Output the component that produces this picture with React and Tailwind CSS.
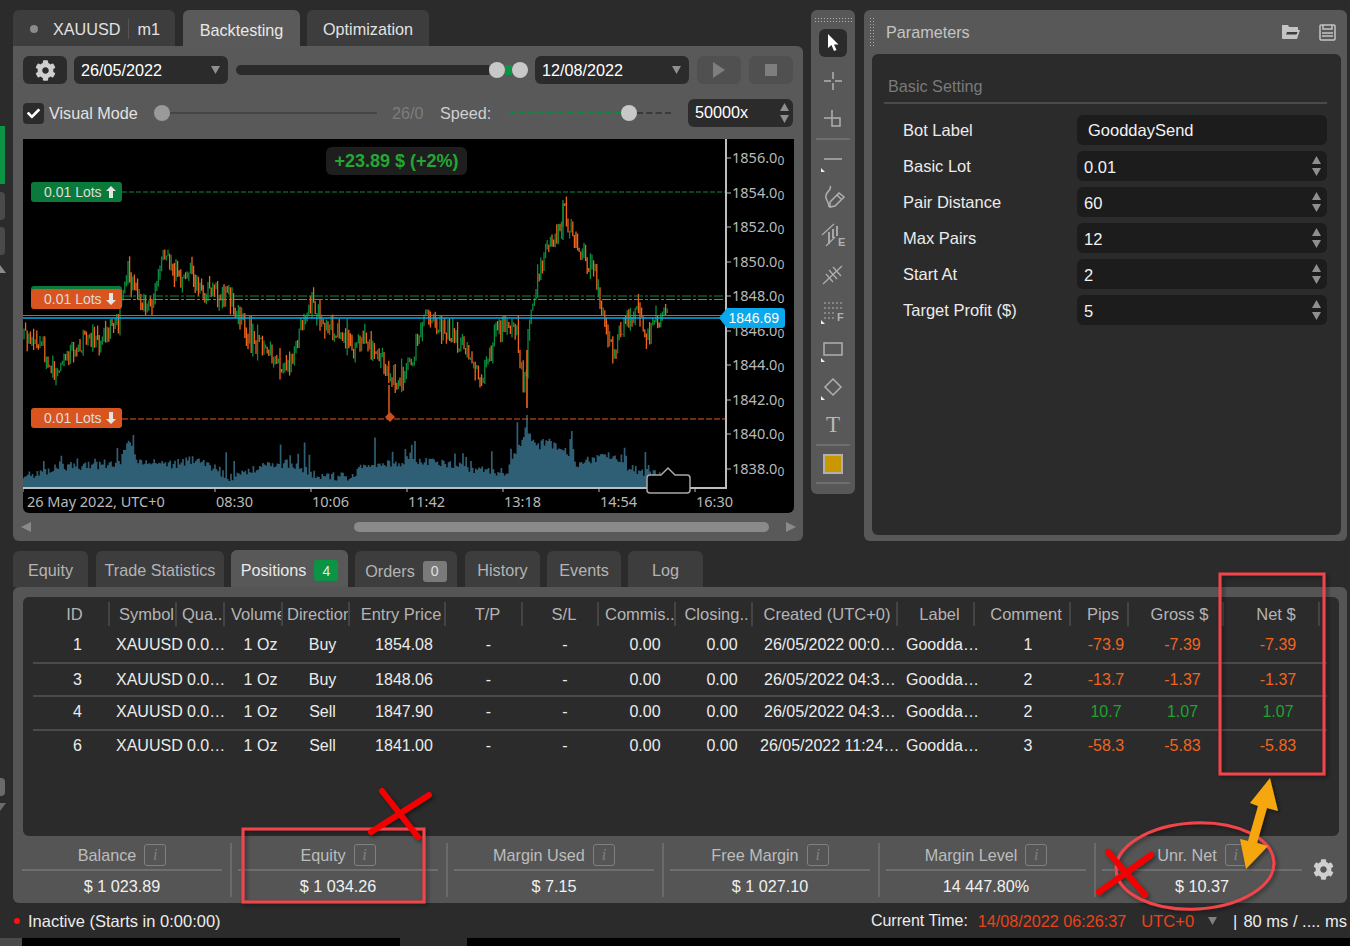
import React from 'react';
import { FaCog, FaCheck } from 'react-icons/fa';

/* chart data: rough outline of the price, the rest is seeded noise */
const PRICE = [[23,338],[33,332],[42,345],[54,374],[65,358],[78,345],[90,340],[105,335],[118,325],[128,272],[138,298],[150,308],[160,262],[170,260],[180,282],[190,272],[198,290],[212,296],[228,296],[240,315],[250,338],[265,350],[280,362],[288,370],[295,345],[305,318],[314,305],[322,322],[340,330],[352,345],[362,340],[375,350],[386,368],[395,382],[410,368],[420,330],[428,315],[445,330],[462,345],[475,368],[484,378],[495,330],[505,325],[516,330],[524,388],[530,325],[540,272],[550,248],[558,235],[563,210],[570,230],[580,252],[594,268],[604,318],[613,352],[622,325],[637,312],[648,335],[658,322],[668,316]];
const VOLUME = [[23,476],[35,474],[60,466],[120,465],[127,440],[140,462],[175,464],[197,458],[215,468],[230,478],[260,467],[287,464],[320,476],[347,477],[367,465],[433,462],[450,465],[480,470],[507,473],[517,450],[526,430],[537,447],[547,442],[567,450],[577,463],[610,456],[627,468],[660,475],[668,480]];

function rng(seed) {
  let s = seed;
  return () => {
    s = (s + 0x6d2b79f5) | 0;
    let t = Math.imul(s ^ (s >>> 15), 1 | s);
    t = (t + Math.imul(t ^ (t >>> 7), 61 | t)) ^ t;
    return ((t ^ (t >>> 14)) >>> 0) / 4294967296;
  };
}

function lerp(points, x) {
  for (let i = 1; i < points.length; i++) {
    if (x <= points[i][0]) {
      const [x0, y0] = points[i - 1];
      const [x1, y1] = points[i];
      return y0 + ((y1 - y0) * (x - x0)) / (x1 - x0);
    }
  }
  return points[points.length - 1][1];
}

function buildCandles() {
  const r = rng(23);
  let green = '';
  let orange = '';
  let prev = lerp(PRICE, 23);
  for (let x = 24; x < 668; x += 1.6) {
    const close = lerp(PRICE, x) + (r() - 0.5) * 20;
    const top = Math.min(prev, close) - r() * r() * 14;
    const bottom = Math.max(prev, close) + r() * r() * 14;
    const seg = `M${x.toFixed(1)} ${top.toFixed(1)}V${bottom.toFixed(1)}`;
    if (close < prev) green += seg;
    else orange += seg;
    prev = close;
  }
  return { green, orange };
}

function buildVolume() {
  const r = rng(5);
  let d = '';
  for (let x = 23; x < 668; x += 1.6) {
    const spike = r() > 0.88 ? r() * 26 : 0;
    const top = lerp(VOLUME, x) + (r() - 0.5) * 9 - spike;
    d += `M${x.toFixed(1)} 487V${Math.min(top, 485).toFixed(1)}`;
  }
  return d;
}

const candles = buildCandles();
const volumeBars = buildVolume();
const axisLabels = [['1856', 158], ['1854', 193], ['1852', 227], ['1850', 262], ['1848', 296], ['1846', 331], ['1844', 365], ['1842', 400], ['1840', 434], ['1838', 469]];
const timeLabels = [['08:30', 215], ['10:06', 311], ['11:42', 407], ['13:18', 503], ['14:54', 599], ['16:30', 695]];

function ChartDrawing() {
  return (
    <svg width="771" height="374" viewBox="23 139 771 374" className="block">
      <path d={volumeBars} stroke="#2f5f75" strokeWidth="1.7" fill="none" />
      <path d={candles.green} stroke="#0c8a3c" strokeWidth="1.3" fill="none" />
      <path d={candles.orange} stroke="#f0641e" strokeWidth="1.3" fill="none" />
      <path d="M389 385V417" stroke="#f0641e" strokeWidth="1.4" />
      <path d="M527 350V408" stroke="#f0641e" strokeWidth="1.6" />
      <path d="M563 200V240" stroke="#0c8a3c" strokeWidth="1.4" />
      <path d="M122 192H726" stroke="#0c8a3c" strokeDasharray="5 2" />
      <path d="M122 296H726" stroke="#0c8a3c" strokeDasharray="9 2 3 2" />
      <path d="M122 299.5H726" stroke="#e0581f" strokeDasharray="9 2 3 2" />
      <path d="M122 419H726" stroke="#e0581f" strokeDasharray="6 2" />
      <path d="M23 315.5H726" stroke="#777" />
      <path d="M23 318H726" stroke="#00aeef" strokeWidth="1.4" />
      <polygon points="390,412 395,417 390,422 385,417" fill="#c9501f" />
      <path d="M726 139V488H23" stroke="#bdbdbd" strokeWidth="2" fill="none" />
      {axisLabels.map(([price, y]) => (
        <g key={price}>
          <path d={`M727 ${y}H731`} stroke="#bdbdbd" />
          <text x="732" y={y + 5} fontSize="14.5" fill="#b9b9b9" fontFamily="'Noto Sans',sans-serif">
            {price}.0<tspan fontSize="12" dy="2">0</tspan>
          </text>
        </g>
      ))}
      <path d="M23 488V492" stroke="#bdbdbd" />
      <text x="27" y="507" fontSize="14.5" fill="#b9b9b9" fontFamily="'Noto Sans',sans-serif">26 May 2022, UTC+0</text>
      {timeLabels.map(([t, x]) => (
        <g key={t}>
          <path d={`M${x} 488V492`} stroke="#bdbdbd" />
          <text x={x + 1} y="507" fontSize="14.5" fill="#b9b9b9" fontFamily="'Noto Sans',sans-serif">{t}</text>
        </g>
      ))}
      <path d="M650 475H661L668 468L675 475H687Q690 475 690 478V490Q690 493 687 493H650Q647 493 647 490V478Q647 475 650 475Z" fill="#000" stroke="#a8a8a8" strokeWidth="1.5" />
    </svg>
  );
}

function LotsTag({ color, up, className }) {
  return (
    <div className={`absolute left-2 flex h-5 w-[91px] items-center rounded-[3px] pl-[13px] text-sm text-[#dddddd] ${color} ${className}`}>
      0.01 Lots
      <svg className="ml-1" width="10" height="12" viewBox="0 0 10 12" fill="#e4e4e4">
        {up ? <polygon points="5,0 10,5 7,5 7,12 3,12 3,5 0,5" /> : <polygon points="5,12 10,7 7,7 7,0 3,0 3,7 0,7" />}
      </svg>
    </div>
  );
}

function BacktestPanel() {
  return (
    <div className="flex w-[790px] flex-col">
      <div className="flex h-9 items-end">
        <div className="flex h-9 w-[162px] items-center rounded-t-md bg-[#3d3d3d] pt-0.5 text-[#e2e2e2]">
          <span className="ml-[17px] h-2 w-2 rounded-full bg-[#8a8a8a]" />
          <span className="ml-[15px]">XAUUSD</span>
          <span className="ml-2 h-5 w-px bg-[#555555]" />
          <span className="ml-2">m1</span>
        </div>
        <div className="ml-2 flex h-9 w-[117px] items-center justify-center rounded-t-md bg-[#5a5a5a] pt-1 text-[#e8e8e8]">Backtesting</div>
        <div className="ml-[7px] flex h-9 w-[122px] items-center justify-center rounded-t-md bg-[#3d3d3d] pt-0.5 text-[#e2e2e2]">Optimization</div>
      </div>
      <div className="flex h-[495px] flex-col rounded-b-md rounded-tr-md bg-[#595959] pl-2.5 pt-2.5">
        <div className="flex h-7 items-center">
          <div className="flex h-7 w-11 items-center justify-center rounded-md bg-[#2b2b2b] text-[#cfcfcf]"><FaCog className="text-[21px]" /></div>
          <DateBox className="ml-[7px]" value="26/05/2022" />
          <div className="ml-2 h-2.5 w-[253px] rounded-l-full bg-[#2b2b2b]" />
          <span className="h-4 w-4 rounded-full bg-[#c8c8c8]" />
          <span className="h-2.5 w-[7px] bg-[#0b9444]" />
          <span className="h-4 w-4 rounded-full bg-[#c8c8c8]" />
          <DateBox className="ml-[7px]" value="12/08/2022" />
          <div className="ml-2 flex h-7 w-11 items-center justify-center rounded-md bg-[#505050]">
            <svg width="14" height="16" viewBox="0 0 14 16"><polygon points="1,0 13,8 1,16" fill="#7e7e7e" /></svg>
          </div>
          <div className="ml-2 flex h-7 w-11 items-center justify-center rounded-md bg-[#505050]">
            <span className="h-3 w-3 bg-[#7e7e7e]" />
          </div>
        </div>
        <div className="mt-[15px] flex h-7 items-center">
          <div className="flex h-[21px] w-[21px] items-center justify-center rounded-[4px] bg-[#2b2b2b] text-white"><FaCheck className="text-[13px]" /></div>
          <span className="ml-[5px] w-[97px] text-[#e2e2e2]">Visual Mode</span>
          <span className="ml-2 h-4 w-4 rounded-full bg-[#9a9a9a]" />
          <span className="h-0.5 w-[207px] bg-[#454545]" />
          <span className="ml-[15px] w-[32px] text-[#7d7d7d]">26/0</span>
          <span className="ml-4 w-[52px] text-[#d0d0d0]">Speed:</span>
          <span className="ml-[17px] w-[113px] border-t-2 border-dashed border-[#0b8a3f]" />
          <span className="-ml-px h-4 w-4 rounded-full bg-[#c8c8c8]" />
          <span className="w-[34px] border-t-2 border-dashed border-[#3a3a3a]" />
          <div className="ml-[17px] flex h-7 w-[105px] items-center justify-between rounded-md bg-[#2b2b2b] pl-[7px] pr-1 text-white">
            <span className="-mt-0.5">50000x</span>
            <Spin />
          </div>
        </div>
        <div className="relative mt-3 h-[374px] w-[771px] overflow-hidden rounded-b-md bg-black">
          <ChartDrawing />
          <div className="absolute left-[303px] top-2 flex h-7 w-[141px] items-center justify-center rounded-md bg-[#1e1e1e] text-lg font-bold text-[#22a832]">+23.89 $ (+2%)</div>
          <LotsTag color="bg-[#0a7a3a]" up className="top-[43px]" />
          <div className="absolute left-2 top-[147px] h-5 w-[91px] rounded-[3px] bg-[#0a7a3a]" />
          <LotsTag color="bg-[#d9541e]" className="top-[150px]" />
          <LotsTag color="bg-[#d9541e]" className="top-[269px]" />
          <div className="absolute left-[696px] top-[169px] flex h-5 w-[66px] items-center justify-end rounded-r-[3px] bg-[#0aa8ec] pr-[6px] text-sm text-white [clip-path:polygon(8px_0,100%_0,100%_100%,8px_100%,0_50%)]">1846.69</div>
        </div>
        <div className="flex h-7 w-[775px] -translate-x-0.5 items-center">
          <svg width="10" height="12" viewBox="0 0 10 12"><polygon points="10,1 0,6 10,11" fill="#8a8a8a" /></svg>
          <div className="ml-[323px] h-2.5 w-[415px] rounded-full bg-[#8a8a8a]" />
          <svg className="ml-[17px]" width="10" height="12" viewBox="0 0 10 12"><polygon points="0,1 10,6 0,11" fill="#8a8a8a" /></svg>
        </div>
      </div>
    </div>
  );
}

function DateBox({ value, className }) {
  return (
    <div className={`flex h-7 w-[154px] items-center justify-between rounded-md bg-[#2b2b2b] pl-[7px] pr-2 text-white ${className}`}>
      <span>{value}</span>
      <svg width="9" height="8" viewBox="0 0 9 8"><polygon points="0,0 9,0 4.5,8" fill="#8f8f8f" /></svg>
    </div>
  );
}

function Spin() {
  return (
    <svg width="9" height="22" viewBox="0 0 9 22">
      <polygon points="4.5,1 9,9 0,9" fill="#8f8f8f" />
      <polygon points="0,13 9,13 4.5,21" fill="#8f8f8f" />
    </svg>
  );
}

const corner = <polygon points="2,23 6,27 2,27" fill="#eeeeee" stroke="none" />;

function ToolIcon({ children }) {
  return (
    <svg width="28" height="28" viewBox="0 0 28 28" fill="none" stroke="#b0b0b0" strokeWidth="1.5">
      {children}
    </svg>
  );
}

function ToolRow({ children, className = 'h-[38px]' }) {
  return <div className={`flex w-full items-center justify-center ${className}`}>{children}</div>;
}

function ToolSep() {
  return <div className="h-0.5 w-[34px] shrink-0 bg-[#6e6e6e]" />;
}

function Toolbar() {
  return (
    <div className="ml-2 flex h-[484px] w-11 flex-col items-center rounded-md bg-[#585858]">
      <div className="mt-[7px] h-[5px] w-[38px] bg-[radial-gradient(#b0b0b0_1px,transparent_1px)] bg-[length:3px_3px]" />
      <div className="mt-0.5 w-full" />
      <ToolRow>
        <div className="flex h-7 w-7 items-center justify-center rounded-md bg-[#2b2b2b]">
          <svg width="14" height="18" viewBox="0 0 14 18"><polygon points="2,0 2,14 5.5,11 8,17 10.5,16 8,10.5 12.5,10.5" fill="#ffffff" /></svg>
        </div>
      </ToolRow>
      <ToolRow><ToolIcon><path d="M14 5v7M14 16v7M5 14h7M16 14h7" /></ToolIcon></ToolRow>
      <ToolRow><ToolIcon><path d="M13 5v7M5 13h8" /><rect x="13" y="13" width="8" height="8" /></ToolIcon></ToolRow>
      <ToolSep />
      <ToolRow><ToolIcon><path d="M5 14h18" />{corner}</ToolIcon></ToolRow>
      <ToolRow>
        <ToolIcon>
          <path d="M11 3c3 3-6 7-4 12 1 3 3 5 3 9" />
          <path d="M11 24l0-5 9-9 5 4-9 9z" />
          <path d="M18 12l4 4" />
        </ToolIcon>
      </ToolRow>
      <ToolRow>
        <ToolIcon>
          <path d="M3 14L15 3M7 25L16 16" strokeWidth="1.1" />
          <path d="M10 11v12M14 8v9M18 5v10" strokeWidth="1.8" />
          <text x="19" y="25" fontSize="11" fontWeight="700" fill="#b0b0b0" stroke="none" fontFamily="'Liberation Sans',sans-serif">E</text>
        </ToolIcon>
      </ToolRow>
      <ToolRow><ToolIcon><path d="M4 25L23 7M10 11l8 9M14 8l8 9M7 15l7 8" strokeWidth="1.2" /></ToolIcon></ToolRow>
      <ToolRow>
        <ToolIcon>
          <path d="M5 6h18M5 11h18M5 16h11M5 21h11" strokeDasharray="2 2" strokeWidth="1.2" />
          <text x="18" y="24" fontSize="11" fontWeight="700" fill="#b0b0b0" stroke="none" fontFamily="'Liberation Sans',sans-serif">F</text>
          {corner}
        </ToolIcon>
      </ToolRow>
      <ToolRow><ToolIcon><rect x="5" y="8" width="18" height="12" />{corner}</ToolIcon></ToolRow>
      <ToolRow><ToolIcon><polygon points="14,6 22,14 14,22 6,14" />{corner}</ToolIcon></ToolRow>
      <ToolRow><span className="font-['Liberation_Serif',serif] text-[23px] text-[#b8b8b8]">T</span></ToolRow>
      <ToolSep />
      <ToolRow className="h-[36px]"><span className="h-5 w-5 border-2 border-[#b0b0b0] bg-[#c99700]" /></ToolRow>
      <ToolSep />
    </div>
  );
}

const params = [
  ['Basic Lot', '0.01'],
  ['Pair Distance', '60'],
  ['Max Pairs', '12'],
  ['Start At', '2'],
  ['Target Profit ($)', '5'],
];

function ParamRow({ label, children }) {
  return (
    <div className="flex h-[30px] items-center pl-[31px] text-[16.5px]">
      <span className="w-[174px] text-[#ececec]">{label}</span>
      <div className="flex h-[30px] w-[250px] items-center justify-between rounded-md bg-[#1c1c1c] pr-[6px] text-[#f2f2f2]">{children}</div>
    </div>
  );
}

function ParamsPanel() {
  return (
    <div className="ml-[9px] flex w-[483px] flex-col rounded-md bg-[#585858]">
      <div className="flex h-11 shrink-0 items-center">
        <div className="ml-[5px] h-[30px] w-[5px] bg-[radial-gradient(#a8a8a8_1px,transparent_1px)] bg-[length:3px_3px]" />
        <span className="ml-[12px] text-[#c4c4c4]">Parameters</span>
        <svg className="ml-[312px]" width="18" height="14" viewBox="0 0 18 14">
          <path d="M0 0h6l1 2h9v4H4L2 13H0z" fill="#c4c4c4" />
          <path d="M4 5h14l-3 9H0z" fill="#c4c4c4" />
          <path d="M5 7h10.5l-1 2.5H4z" fill="#3d3d3d" />
        </svg>
        <svg className="ml-[19px]" width="17" height="17" viewBox="0 0 17 17" fill="none" stroke="#c4c4c4" strokeWidth="1.5">
          <rect x="1" y="1" width="15" height="15" rx="1" />
          <path d="M4 1v4h9V1M3 9h11M3 12h11" />
        </svg>
      </div>
      <div className="mb-1.5 ml-2 flex h-[481px] w-[469px] flex-col rounded-md bg-[#2b2b2b]">
        <div className="mx-3 mt-5 h-[30px] w-[443px] border-b-2 border-[#4a4a4a] pl-1 text-[#7a7a7a]">Basic Setting</div>
        <div className="mt-[11px] flex flex-col gap-1.5 pl-0">
          <ParamRow label="Bot Label"><span className="pl-[11px]">GooddaySend</span></ParamRow>
          {params.map(([label, value]) => (
            <ParamRow key={label} label={label}>
              <span className="pl-[7px] pt-0.5">{value}</span>
              <Spin />
            </ParamRow>
          ))}
        </div>
      </div>
    </div>
  );
}

const COLS = 'grid grid-cols-[77px_67px_48px_58px_67px_96px_77px_76px_77px_77px_145px_77px_96px_58px_95px_96px]';
// the narrow headers start closer to the left edge of their column and get clipped
const headers = [
  ['ID', 'pl-[9px]'], ['Symbol', 'pl-[9px]'], ['Qua..', 'pl-[5px]'], ['Volume', 'pl-[6px]'],
  ['Directior', 'pl-[4px]'], ['Entry Price', 'pl-[9px]'], ['T/P', 'pl-[9px]'], ['S/L', 'pl-[9px]'],
  ['Commis..', 'pl-[6px]'], ['Closing..', 'pl-[7px]'], ['Created (UTC+0)', 'pl-[6px]'], ['Label', 'pl-[9px]'],
  ['Comment', 'pl-[9px]'], ['Pips', 'pl-[9px]'], ['Gross $', 'pl-[9px]'], ['Net $', 'pl-[11px]'],
];
const ORANGE = 'text-[#f0641e]';
const GREEN = 'text-[#1aa52f]';
const rows = [
  { id: '1', dir: 'Buy', price: '1854.08', created: '26/05/2022 00:0…', comment: '1', pips: '-73.9', gross: '-7.39', net: '-7.39', tone: ORANGE, h: 'h-[36px] border-b-2' },
  { id: '3', dir: 'Buy', price: '1848.06', created: '26/05/2022 04:3…', comment: '2', pips: '-13.7', gross: '-1.37', net: '-1.37', tone: ORANGE, h: 'h-[33px] border-b-2' },
  { id: '4', dir: 'Sell', price: '1847.90', created: '26/05/2022 04:3…', comment: '2', pips: '10.7', gross: '1.07', net: '1.07', tone: GREEN, h: 'h-[34px] border-b-2 pb-0.5' },
  { id: '6', dir: 'Sell', price: '1841.00', created: '26/05/2022 11:24…', comment: '3', pips: '-58.3', gross: '-5.83', net: '-5.83', tone: ORANGE, h: 'h-[29px]' },
];

function PositionsTable() {
  return (
    <div className="ml-2.5 mr-2 mt-2.5 h-[239px] rounded-md bg-[#2b2b2b] pl-2.5 pt-[3px]">
      <div className={`${COLS} h-[28px] items-center text-[16.5px] text-[#b4b4b4]`}>
        {headers.map(([h, pad]) => (
          <div key={h} className={`h-6 overflow-hidden whitespace-nowrap border-r-2 border-[#444444] pr-px text-center leading-6 ${pad}`}>{h}</div>
        ))}
      </div>
      {rows.map((r) => (
        <div key={r.id} className={`${COLS} w-[1294px] items-center whitespace-nowrap border-[#4a4a4a] text-base text-[#ececec] ${r.h}`}>
          <div className="pl-3 text-center">{r.id}</div>
          <div className="pl-[6px]">XAUUSD</div>
          <div className="pl-2.5">0.0…</div>
          <div className="pl-[13px] text-center">1 Oz</div>
          <div className="pl-3 text-center">{r.dir}</div>
          <div className="pl-3 text-center">{r.price}</div>
          <div className="pl-2 text-center">-</div>
          <div className="pl-2 text-center">-</div>
          <div className="pl-[15px] text-center">0.00</div>
          <div className="pl-[15px] text-center">0.00</div>
          <div className={r.id === '6' ? 'pl-[7px]' : 'pl-[11px]'}>{r.created}</div>
          <div className="pl-2">Goodda…</div>
          <div className="pl-2.5 text-center">{r.comment}</div>
          <div className={`pl-[12px] text-center ${r.tone}`}>{r.pips}</div>
          <div className={`pl-3 text-center ${r.tone}`}>{r.gross}</div>
          <div className={`pl-3 text-center ${r.tone}`}>{r.net}</div>
        </div>
      ))}
    </div>
  );
}

const stats = [
  ['Balance', '$ 1 023.89'],
  ['Equity', '$ 1 034.26'],
  ['Margin Used', '$ 7.15'],
  ['Free Margin', '$ 1 027.10'],
  ['Margin Level', '14 447.80%'],
  ['Unr. Net', '$ 10.37'],
];

function StatsBar() {
  return (
    <div className="flex h-[67px] items-center pl-[9px]">
      {stats.map(([label, value], i) => (
        <React.Fragment key={label}>
          {i > 0 && <div className="ml-2 mr-1.5 h-[54px] w-0.5 bg-[#6a6a6a]" />}
          <div className="flex w-[200px] flex-col items-center">
            <div className="flex h-[28px] items-center text-[#bcbcbc]">
              {label}
              <span className="ml-2 flex h-[22px] w-[22px] items-center justify-center rounded-[3px] border border-[#808080] font-['Liberation_Serif',serif] italic text-[#808080]">i</span>
            </div>
            <div className="h-0.5 w-full bg-[#6e6e6e]" />
            <div className="mt-[3px] h-[24px] text-[#f0f0f0]">{value}</div>
          </div>
        </React.Fragment>
      ))}
      <FaCog className="ml-[11px] text-[21px] text-[#cfcfcf]" />
    </div>
  );
}

function BottomTab({ label, className }) {
  return <div className={`flex h-9 items-center justify-center rounded-t-md bg-[#3d3d3d] pt-0.5 ${className}`}>{label}</div>;
}

function BottomTabs() {
  return (
    <div className="mt-[9px] flex h-[37px] items-end text-[#b4b4b4]">
      <BottomTab label="Equity" className="w-[75px]" />
      <BottomTab label="Trade Statistics" className="ml-2 w-[128px]" />
      <div className="ml-[7px] flex h-[37px] w-[117px] items-center justify-center rounded-t-md bg-[#585858] pt-1 text-[#e8e8e8]">
        Positions
        <span className="ml-2 flex h-[21px] w-6 items-center justify-center rounded-[3px] bg-[#0b9444] text-sm text-[#e8e8e8]">4</span>
      </div>
      <div className="ml-[7px] flex h-9 w-[102px] items-center justify-center rounded-t-md bg-[#3d3d3d] pt-1">
        Orders
        <span className="ml-2 flex h-[21px] w-6 items-center justify-center rounded-[3px] bg-[#7a7a7a] text-sm text-[#e0e0e0]">0</span>
      </div>
      <BottomTab label="History" className="ml-2 w-[75px]" />
      <BottomTab label="Events" className="ml-[7px] w-[74px]" />
      <BottomTab label="Log" className="ml-[7px] w-[75px]" />
    </div>
  );
}

function LeftRail() {
  return (
    <div className="flex w-[13px] shrink-0 flex-col">
      <div className="mt-[126px] h-[58px] w-[5px] bg-[#0b9444]" />
      <div className="mt-2 h-7 w-[5px] rounded-r bg-[#4a4a4a]" />
      <div className="mt-[7px] h-7 w-[5px] rounded-r bg-[#4a4a4a]" />
      <svg className="mt-[10px]" width="6" height="8" viewBox="0 0 6 8"><polygon points="0,0 6,8 0,8" fill="#8a8a8a" /></svg>
      <div className="mt-[505px] h-[18px] w-[5px] rounded-r bg-[#6a6a6a]" />
      <svg className="mt-[7px]" width="6" height="8" viewBox="0 0 6 8"><polygon points="0,0 6,0 0,8" fill="#6a6a6a" /></svg>
    </div>
  );
}

function StatusBar() {
  return (
    <div className="flex h-[36px] items-center pl-[14px] text-[16.5px] text-[#ececec]">
      <span className="h-1.5 w-1.5 rounded-full bg-[#ff1010]" />
      <span className="ml-2">Inactive (Starts in 0:00:00)</span>
      <span className="ml-auto text-base">Current Time:</span>
      <span className="ml-2.5 text-[16.2px] text-[#e8431a]">14/08/2022 06:26:37</span>
      <span className="ml-[15px] text-[#e8431a]">UTC+0</span>
      <svg className="ml-[14px]" width="9" height="8" viewBox="0 0 9 8"><polygon points="0,0 9,0 4.5,8" fill="#808080" /></svg>
      <span className="ml-4">|</span>
      <span className="ml-[6px] whitespace-nowrap">80 ms / .... ms</span>
    </div>
  );
}

/* red marks and the arrow somebody painted on the screenshot */
function Annotations() {
  return (
    <svg className="pointer-events-none absolute left-0 top-0" width="1350" height="946" viewBox="0 0 1350 946" fill="none">
      <defs>
        <filter id="sh" x="-20%" y="-20%" width="140%" height="140%">
          <feDropShadow dx="2" dy="2" stdDeviation="2" floodColor="#000" floodOpacity="0.45" />
        </filter>
      </defs>
      <g filter="url(#sh)">
        <rect x="1220" y="574" width="104" height="200" stroke="#f2444a" strokeWidth="3" />
        <rect x="243" y="829" width="181" height="73" stroke="#f2444a" strokeWidth="3" />
        <ellipse cx="1195" cy="866" rx="79" ry="43" stroke="#f2444a" strokeWidth="3" transform="rotate(-3 1195 866)" />
        <path d="M382 791L418 837M429 795L371 832M1108 852L1145 895M1151 855L1099 892" stroke="#f40000" strokeWidth="6" strokeLinecap="round" />
        <polygon points="1270,778 1278,811 1267,808 1257,843 1268,846 1246,869 1240,839 1248,841 1258,806 1250,803" fill="#f5a70f" />
      </g>
    </svg>
  );
}

export default function App() {
  return (
    <div className="relative flex h-[946px] w-[1350px] flex-col overflow-hidden bg-[#2b2b2b] font-['Liberation_Sans',Arial,sans-serif] text-[16.2px]">
      <div className="flex h-[938px] shrink-0">
        <LeftRail />
        <div className="flex w-[1334px] flex-col pt-2.5">
          <div className="flex h-[531px]">
            <BacktestPanel />
            <Toolbar />
            <ParamsPanel />
          </div>
          <BottomTabs />
          <div className="h-[316px] rounded-md bg-[#555555]">
            <PositionsTable />
            <StatsBar />
          </div>
          <div className="-ml-[13px]">
            <StatusBar />
          </div>
        </div>
      </div>
      <div className="flex h-2 bg-black">
        <div className="w-[22px] bg-[#4a4a4a]" />
        <div className="ml-[378px] w-[67px] bg-[#2b2b2b]" />
      </div>
      <Annotations />
    </div>
  );
}
